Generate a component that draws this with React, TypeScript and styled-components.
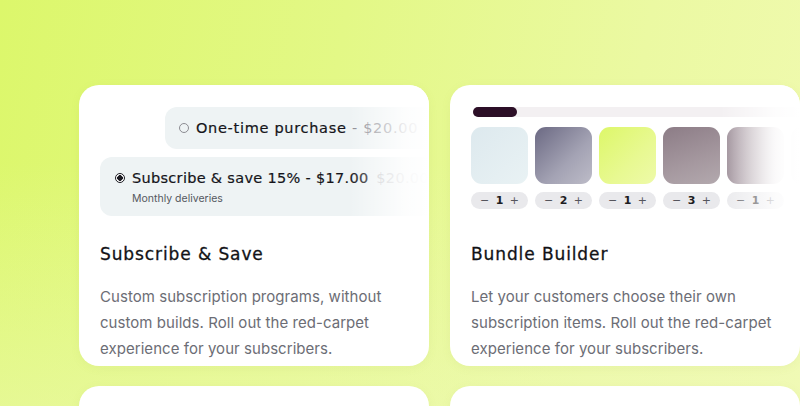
import React from "react";
import styled, { createGlobalStyle } from "styled-components";

const GlobalStyle = createGlobalStyle`
  html, body {
    margin: 0;
    padding: 0;
    height: 100%;
    overflow: hidden;
  }
  body {
    font-family: Inter, "Liberation Sans", sans-serif;
    -webkit-font-smoothing: antialiased;
  }
`;

const Page = styled.main`
  height: 406px;
  overflow: hidden;
  box-sizing: border-box;
  padding: 85px 0 0 79px;
  background:
    linear-gradient(180deg, rgba(255, 255, 255, 0) 40%, rgba(240, 250, 190, 0.45) 100%),
    linear-gradient(100deg, #dcf76b 0%, #e3f886 40%, #ebf9a2 75%, #f0faaf 100%);
`;

const Grid = styled.div`
  display: grid;
  grid-template-columns: 350px 350px;
  column-gap: 21px;
  row-gap: 20px;
`;

const Card = styled.section`
  position: relative;
  background: #fff;
  border-radius: 20px;
  height: 281px;
  box-sizing: border-box;
  padding: 0 21px;
  overflow: hidden;
  box-shadow: 0 2px 10px rgba(150, 170, 60, 0.08);
`;

const Visual = styled.div`
  position: relative;
  height: 131px;
  margin: 0 -21px;
  padding: 22px 0 0 21px;
  box-sizing: border-box;
  overflow: hidden;

  &::after {
    content: "";
    position: absolute;
    top: 0;
    right: 0;
    bottom: 0;
    width: 80px;
    background: linear-gradient(90deg, rgba(255, 255, 255, 0) 0%, rgba(255, 255, 255, 0.85) 70%, #fff 100%);
  }
`;

const Options = styled.div`
  display: flex;
  flex-direction: column;
  gap: 8px;
`;

const Option = styled.div<{ $indent: number; $tall?: boolean }>`
  display: flex;
  flex-direction: column;
  justify-content: center;
  margin-left: ${(p) => p.$indent}px;
  width: 420px;
  height: ${(p) => (p.$tall ? 59 : 42)}px;
  box-sizing: border-box;
  padding-left: ${(p) => (p.$tall ? 15 : 14)}px;
  padding-top: ${(p) => (p.$tall ? 2 : 0)}px;
  background: #eef3f4;
  border-radius: 12px;
`;

const OptionRow = styled.div<{ $spread: number }>`
  display: flex;
  align-items: center;
  gap: 7px;
  font-family: "DejaVu Sans", Verdana, sans-serif;
  font-size: 14.5px;
  letter-spacing: ${(p) => p.$spread}px;
  color: #15151a;
  -webkit-text-stroke: 0.2px #15151a;
  white-space: nowrap;
`;

const Price = styled.span`
  color: #8a8a92;
  -webkit-text-stroke: 0;
`;

const OldPrice = styled.span`
  color: #c4c6ca;
  margin-left: 3px;
  -webkit-text-stroke: 0;
`;

const Radio = styled.span<{ $checked?: boolean }>`
  width: 10px;
  height: 10px;
  border-radius: 50%;
  box-sizing: border-box;
  flex: none;
  border: 1.4px solid ${(p) => (p.$checked ? "#1c1b22" : "#8c8c92")};
  background: ${(p) =>
    p.$checked ? "radial-gradient(circle, #1c1b22 0 2.6px, #fff 3px)" : "transparent"};
`;

const Note = styled.div`
  margin: 6px 0 0 17px;
  font-size: 10.5px;
  color: #555860;
`;

const Progress = styled.div`
  height: 10px;
  width: 340px;
  margin-left: 2px;
  border-radius: 5px;
  background: #f3f0f2;
`;

const ProgressFill = styled.div`
  height: 100%;
  width: 44px;
  border-radius: 5px;
  background: #2c0f27;
`;

const Tiles = styled.div`
  display: flex;
  gap: 7px;
  margin-top: 10px;
`;

const Item = styled.div`
  display: flex;
  flex-direction: column;
  gap: 8px;
  flex: none;
  width: 57px;
`;

const Tile = styled.div<{ $bg: string }>`
  width: 57px;
  height: 57px;
  border-radius: 11px;
  background: ${(p) => p.$bg};
`;

const Stepper = styled.div`
  display: flex;
  align-items: center;
  justify-content: space-between;
  height: 17px;
  padding: 0 9px;
  border-radius: 9px;
  background: #e9e9ec;
  font-family: "DejaVu Sans", sans-serif;
  font-size: 11px;
  color: #55555c;
`;

const Count = styled.span`
  font-weight: 700;
  color: #1d1d22;
`;

const Title = styled.h2`
  margin: 27px 0 0;
  font-family: "DejaVu Sans", Verdana, sans-serif;
  font-weight: 400;
  font-size: 17px;
  line-height: 22px;
  letter-spacing: 0.9px;
  color: #121216;
  -webkit-text-stroke: 0.3px #121216;
`;

const Body = styled.p`
  margin: 19px 0 0;
  font-size: 15px;
  line-height: 26px;
  letter-spacing: 0.05px;
  color: #6c6d75;
`;

const tiles = [
  { bg: "linear-gradient(135deg, #dde9ee 0%, #e9f2f4 100%)", n: 1 },
  { bg: "linear-gradient(135deg, #6b6983 0%, #a4a3b4 60%, #bdbcc8 100%)", n: 2 },
  { bg: "linear-gradient(135deg, #ddf769 0%, #e8f992 60%, #eefaa9 100%)", n: 1 },
  { bg: "linear-gradient(160deg, #8c7c86 0%, #a5989f 60%, #b3a9ae 100%)", n: 3 },
  { bg: "linear-gradient(90deg, #9b8c96 0%, #c4bac0 55%, #f2eff1 100%)", n: 1 },
];

const SubscribeVisual = () => (
  <Visual>
    <Options>
      <Option $indent={65}>
        <OptionRow $spread={0.7}>
          <Radio />
          <span>
            One-time purchase <Price>- $20.00</Price>
          </span>
        </OptionRow>
      </Option>
      <Option $indent={0} $tall>
        <OptionRow $spread={0.3}>
          <Radio $checked />
          <span>
            Subscribe &amp; save 15% - $17.00 <OldPrice>$20.00</OldPrice>
          </span>
        </OptionRow>
        <Note>Monthly deliveries</Note>
      </Option>
    </Options>
  </Visual>
);

const BundleVisual = () => (
  <Visual>
    <Progress>
      <ProgressFill />
    </Progress>
    <Tiles>
      {tiles.map((t, i) => (
        <Item key={i}>
          <Tile $bg={t.bg} />
          <Stepper>
            <span>−</span>
            <Count>{t.n}</Count>
            <span>+</span>
          </Stepper>
        </Item>
      ))}
      <Item>
        <Tile $bg="#f1eff1" />
      </Item>
    </Tiles>
  </Visual>
);

const App = () => (
  <Page>
    <GlobalStyle />
    <Grid>
      <Card>
        <SubscribeVisual />
        <Title>Subscribe &amp; Save</Title>
        <Body>
          Custom subscription programs, without custom builds. Roll out the red-carpet
          experience for your subscribers.
        </Body>
      </Card>
      <Card>
        <BundleVisual />
        <Title>Bundle Builder</Title>
        <Body>
          Let your customers choose their own subscription items. Roll out the red-carpet
          experience for your subscribers.
        </Body>
      </Card>
      <Card />
      <Card />
    </Grid>
  </Page>
);

export default App;
